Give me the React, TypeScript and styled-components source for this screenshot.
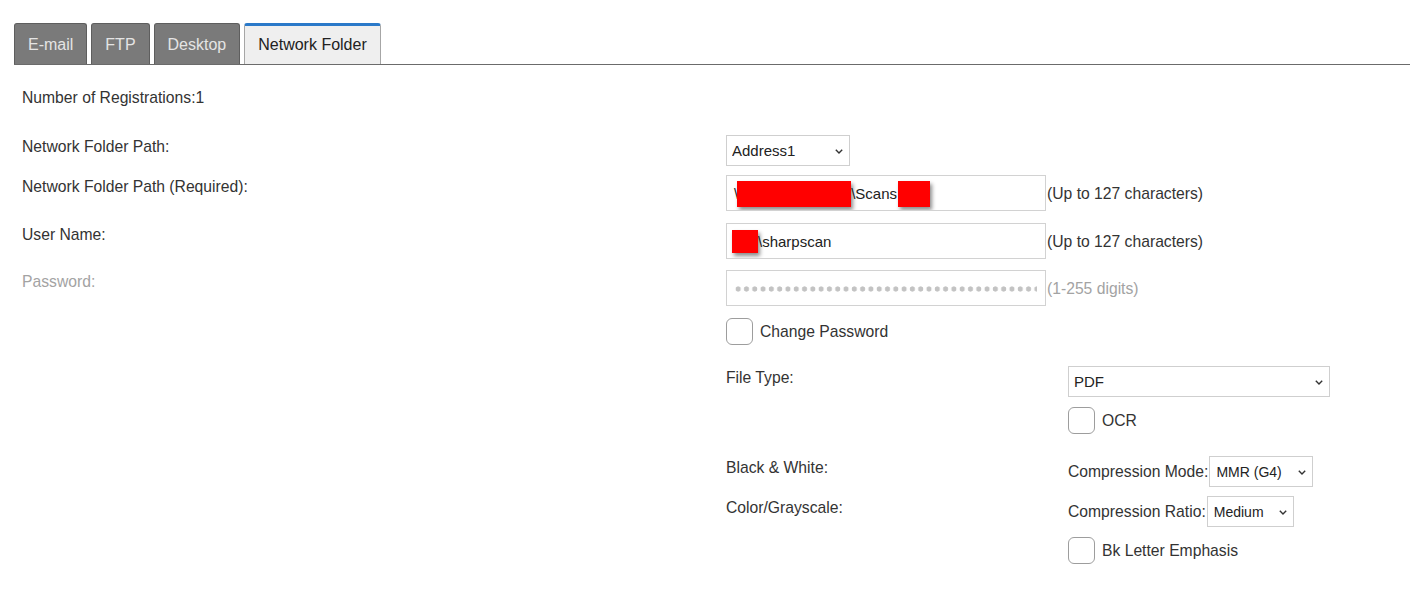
import React from 'react'
import styled, { createGlobalStyle } from 'styled-components'

const GlobalStyle = createGlobalStyle`
  body {
    margin: 0;
    background: #fff;
    font-family: "Liberation Sans", Arial, sans-serif;
    font-size: 15.7px;
    color: #333;
  }
`

const Page = styled.div`
  padding: 23px 6px 0 14px;
`

const TabBar = styled.div`
  display: flex;
  align-items: flex-end;
  gap: 4px;
  border-bottom: 1px solid #6b6b6b;
`

const Tab = styled.div<{ $active?: boolean }>`
  box-sizing: border-box;
  height: 41px;
  padding: 0 13px;
  display: flex;
  align-items: center;
  border: 1px solid ${p => (p.$active ? '#a6a6a6' : '#5e5e5e')};
  border-bottom: none;
  border-top: ${p => (p.$active ? '3px solid #2a79c9' : '1px solid #5e5e5e')};
  border-radius: 3px 3px 0 0;
  background: ${p => (p.$active ? '#efefef' : '#7a7a7a')};
  color: ${p => (p.$active ? '#222' : '#e4e4e4')};
  font-size: 16px;
  padding-top: ${p => (p.$active ? '0' : '1px')};
`

const Content = styled.div`
  padding-left: 8px;
`

const Registrations = styled.div`
  margin-top: 24px;
  line-height: 18px;
  color: #333;
`

const Form = styled.div`
  margin-top: 28px;
  display: flex;
  flex-direction: column;
`

// three tracks: main labels, sub labels, sub fields
const Row = styled.div<{ $gap: number }>`
  display: grid;
  grid-template-columns: 704px 342px 1fr;
  align-items: start;
  margin-top: ${p => p.$gap}px;
`

const Cell = styled.div<{ $col: string }>`
  grid-column: ${p => p.$col};
  display: flex;
  align-items: center;
`

const Label = styled.div<{ $col?: string; $muted?: boolean }>`
  grid-column: ${p => p.$col ?? '1'};
  padding-top: 3px;
  line-height: 18px;
  color: ${p => (p.$muted ? '#a3a3a3' : '#333')};
`

const SelectWrap = styled.div<{ $w: number }>`
  position: relative;
  flex: none;
  width: ${p => p.$w}px;
  height: 31px;
`

const Select = styled.select<{ $size: number; $pad: number }>`
  appearance: none;
  -webkit-appearance: none;
  box-sizing: border-box;
  width: 100%;
  height: 100%;
  border: 1px solid #cfcfcf;
  border-radius: 0;
  background: #fff;
  color: #222;
  font-family: "Liberation Sans", Arial, sans-serif;
  font-size: ${p => p.$size}px;
  padding: 0 0 0 ${p => p.$pad - 1}px;
  outline: none;
`

const Chevron = styled.svg`
  position: absolute;
  right: 7px;
  top: 50%;
  margin-top: -2px;
  pointer-events: none;
`

const FieldBox = styled.div<{ $disabled?: boolean }>`
  box-sizing: border-box;
  flex: none;
  width: 320px;
  height: 36px;
  border: 1px solid #d2d2d2;
  background: #fff;
  padding: 1px 7px 0;
  display: flex;
  align-items: center;
  white-space: nowrap;
  overflow: hidden;
  font-size: 15px;
  color: ${p => (p.$disabled ? '#c2c2c2' : '#222')};
`

// masked password: a row of grey discs, the last one clipped at the text edge
const Mask = styled.span`
  flex: 1;
  height: 8px;
  margin-right: 1px;
  background: radial-gradient(circle at 4.15px 4px, #c3c3c3 2.3px, transparent 2.9px) 0 0 / 8.3px 8px repeat-x;
`

// blacked-out parts of the stored path
const Redact = styled.span<{ $w: number; $h: number; $ml?: number }>`
  display: inline-block;
  flex: none;
  width: ${p => p.$w}px;
  height: ${p => p.$h}px;
  margin-left: ${p => p.$ml ?? 0}px;
  background: #ff0000;
  box-shadow: 2px 3px 4px rgba(0, 0, 0, 0.45);
`

const Note = styled.span<{ $muted?: boolean }>`
  margin-left: 1px;
  padding-top: 1px;
  white-space: nowrap;
  color: ${p => (p.$muted ? '#a3a3a3' : '#333')};
`

const Box = styled.span`
  box-sizing: border-box;
  width: 27px;
  height: 27px;
  border: 1px solid #9d9d9d;
  border-radius: 6px;
  background: #fff;
  flex: none;
`

const BoxLabel = styled.span`
  margin-left: 7px;
  padding-top: 1px;
  color: #333;
`

const Inline = styled.span`
  margin-right: 1px;
  padding-top: 1px;
  white-space: nowrap;
  color: #333;
`

function Dropdown({ value, width, size = 15, pad = 6 }: { value: string; width: number; size?: number; pad?: number }) {
  return (
    <SelectWrap $w={width}>
      <Select $size={size} $pad={pad} defaultValue={value}>
        <option>{value}</option>
      </Select>
      <Chevron width="8" height="5" viewBox="0 0 8 5">
        <path d="M0.8 0.8 L4 4 L7.2 0.8" fill="none" stroke="#333" strokeWidth="1.4" />
      </Chevron>
    </SelectWrap>
  )
}

function Check({ label }: { label: string }) {
  return (
    <>
      <Box />
      <BoxLabel>{label}</BoxLabel>
    </>
  )
}

export default function App() {
  return (
    <Page>
      <GlobalStyle />
      <TabBar>
        <Tab>E-mail</Tab>
        <Tab>FTP</Tab>
        <Tab>Desktop</Tab>
        <Tab $active>Network Folder</Tab>
      </TabBar>
      <Content>
        <Registrations>Number of Registrations:1</Registrations>
        <Form>
          <Row $gap={0}>
            <Label>Network Folder Path:</Label>
            <Cell $col="2 / 4">
              <Dropdown value="Address1" width={124} />
            </Cell>
          </Row>
          <Row $gap={9}>
            <Label>Network Folder Path (Required):</Label>
            <Cell $col="2 / 4">
              <FieldBox>
                {'\\'}
                <Redact $w={114} $h={26} $ml={-1} />
                {'\\Scans'}
                <Redact $w={32} $h={26} $ml={1} />
              </FieldBox>
              <Note>(Up to 127 characters)</Note>
            </Cell>
          </Row>
          <Row $gap={12}>
            <Label>User Name:</Label>
            <Cell $col="2 / 4">
              <FieldBox>
                <Redact $w={26} $h={23} $ml={-2} />
                {'\\sharpscan'}
              </FieldBox>
              <Note>(Up to 127 characters)</Note>
            </Cell>
          </Row>
          <Row $gap={11}>
            <Label $muted>Password:</Label>
            <Cell $col="2 / 4">
              <FieldBox $disabled aria-label="password">
                <Mask />
              </FieldBox>
              <Note $muted>(1-255 digits)</Note>
            </Cell>
          </Row>
          <Row $gap={12}>
            <Cell $col="2 / 4">
              <Check label="Change Password" />
            </Cell>
          </Row>
          <Row $gap={21}>
            <Label $col="2">File Type:</Label>
            <Cell $col="3">
              <Dropdown value="PDF" width={262} />
            </Cell>
          </Row>
          <Row $gap={10}>
            <Cell $col="3">
              <Check label="OCR" />
            </Cell>
          </Row>
          <Row $gap={22}>
            <Label $col="2">Black &amp; White:</Label>
            <Cell $col="3">
              <Inline>Compression Mode:</Inline>
              <Dropdown value="MMR (G4)" width={104} size={14} pad={7} />
            </Cell>
          </Row>
          <Row $gap={9}>
            <Label $col="2">Color/Grayscale:</Label>
            <Cell $col="3">
              <Inline>Compression Ratio:</Inline>
              <Dropdown value="Medium" width={87} size={14} pad={7} />
            </Cell>
          </Row>
          <Row $gap={10}>
            <Cell $col="3">
              <Check label="Bk Letter Emphasis" />
            </Cell>
          </Row>
        </Form>
      </Content>
    </Page>
  )
}
